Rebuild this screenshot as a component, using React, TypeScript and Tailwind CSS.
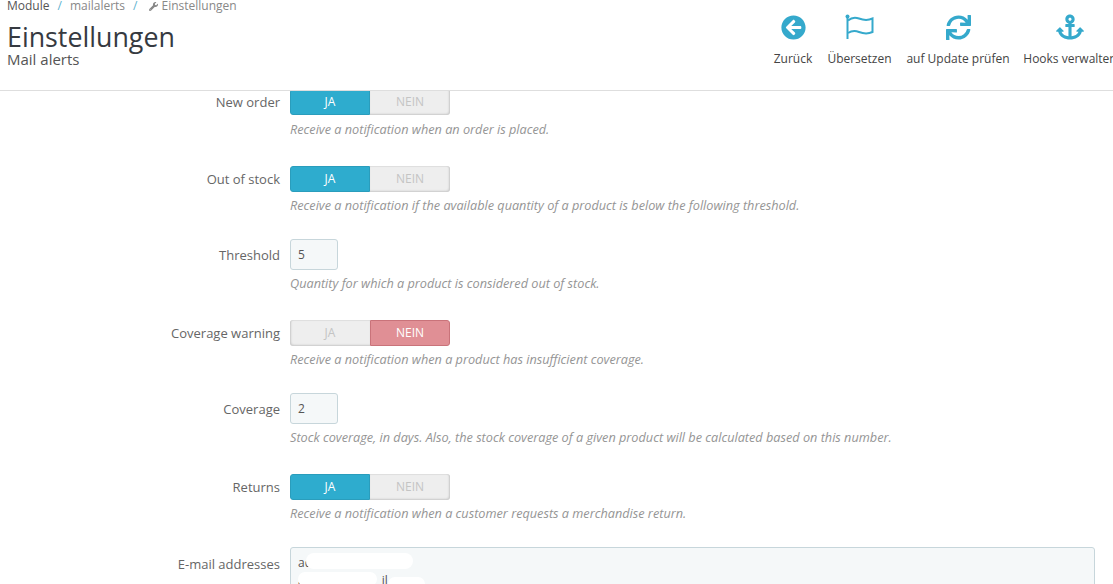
import React from "react";
import { FaArrowCircleLeft, FaSync, FaAnchor, FaWrench } from "react-icons/fa";

const FlagIcon = () => (
    <svg width="30" height="26" viewBox="0 0 30 26" fill="none" stroke="#35a9cc" strokeWidth="2">
        <circle cx="2.500" cy="2.500" r="2" fill="#35a9cc" stroke="none" />
        <path d="M2.500 3V25" />
        <path d="M3 6.500C7 3 10 3 14 4.500C18 6 22 7 27.500 4.500V18C22 20.500 18 19.500 14 18C10 16.500 7 16.500 3 19" strokeWidth="2" />
    </svg>
);

const Toolbtn = ({ icon, label, w }: { icon: React.ReactNode; label: string; w: string }) => (
    <div className={`flex flex-col items-center shrink-0 ${w}`}>
        <div className="h-[26px] flex items-center justify-center text-[#35a9cc]">{icon}</div>
        <span className="mt-[10px] text-[12px] leading-[18px] text-[#444] whitespace-nowrap">{label}</span>
    </div>
);

const Toggle = ({ on }: { on: boolean }) => (
    <div className="flex w-[160px] h-[26px] text-[12px] leading-[26px] text-center">
        {on ? (
            <>
                <div className="w-[80px] bg-[#2eacce] text-white rounded-l-[3px] border border-[#2a9dbc] leading-[24px]">JA</div>
                <div className="w-[80px] bg-[#eeeeee] text-[#c4c4c4] rounded-r-[3px] shadow-[inset_-1px_-1px_2px_rgba(0,0,0,0.16),inset_0_1px_1px_rgba(0,0,0,0.06)]">NEIN</div>
            </>
        ) : (
            <>
                <div className="w-[80px] bg-[#eeeeee] text-[#c4c4c4] rounded-l-[3px] shadow-[inset_1px_-1px_2px_rgba(0,0,0,0.16),inset_0_1px_1px_rgba(0,0,0,0.06)]">JA</div>
                <div className="w-[80px] bg-[#e08f95] text-white rounded-r-[3px] border border-[#c9737a] leading-[24px]">NEIN</div>
            </>
        )}
    </div>
);

const NumInput = ({ value }: { value: string }) => (
    <div className="w-[48px] h-[31px] pl-[7px] bg-[#f5f8f9] border border-[#c7d6db] rounded-[3px] text-[12px] leading-[30px] text-[#555]">
        {value}
    </div>
);

const Row = ({ label, help, mb, labelLh = "leading-[26px]", helpMt = "mt-[4px]", children }: { label: string; help: string; mb: string; labelLh?: string; helpMt?: string; children: React.ReactNode }) => (
    <div className={`flex ${mb}`}>
        <div className={`w-[280px] shrink-0 text-right text-[13px] text-[#666] ${labelLh}`}>{label}</div>
        <div className="ml-[10px]">
            {children}
            <p className={`${helpMt} text-[12.7px] leading-[18px] italic text-[#959595] whitespace-nowrap`}>{help}</p>
        </div>
    </div>
);

const App = () => {
    return (
        <div className="w-[1113px] h-[584px] overflow-hidden bg-white font-['Open_Sans',sans-serif]">
            <header className="relative z-10 h-[91px] bg-white border-b border-[#dedede] flex justify-between overflow-hidden">
                <div className="pl-[7px]">
                    <div className="flex items-center h-[12px] text-[12px] leading-[12px] text-[#888]">
                        <span className="text-[#555]">Module</span>
                        <span className="mx-[8px] text-[#5fb3cf]">/</span>
                        <span>mailalerts</span>
                        <span className="mx-[8px] text-[#5fb3cf]">/</span>
                        <FaWrench className="ml-[4px] mr-[3px] text-[9px] text-[#888]" />
                        <span>Einstellungen</span>
                    </div>
                    <h1 className="mt-[11px] text-[26.8px] leading-[28px] text-[#363a41]">Einstellungen</h1>
                    <p className="text-[15px] leading-[17px] text-[#555]">Mail alerts</p>
                </div>
                <div className="flex pt-[14px] gap-[14px] h-fit -mr-[3px]">
                    <Toolbtn icon={<FaArrowCircleLeft size={25} />} label="Zurück" w="w-[40px]" />
                    <Toolbtn icon={<FlagIcon />} label="Übersetzen" w="w-[65px]" />
                    <Toolbtn icon={<FaSync size={25} />} label="auf Update prüfen" w="w-[104px]" />
                    <Toolbtn icon={<FaAnchor size={28} />} label="Hooks verwalten" w="w-[92px]" />
                </div>
            </header>
            <main className="-mt-[2px]">
                <Row label="New order" mb="mb-[28px]" helpMt="mt-[5px]" help="Receive a notification when an order is placed.">
                    <Toggle on />
                </Row>
                <Row label="Out of stock" mb="mb-[25px]" help="Receive a notification if the available quantity of a product is below the following threshold.">
                    <Toggle on />
                </Row>
                <Row label="Threshold" mb="mb-[28px]" labelLh="leading-[32px]" help="Quantity for which a product is considered out of stock.">
                    <NumInput value="5" />
                </Row>
                <Row label="Coverage warning" mb="mb-[25px]" help="Receive a notification when a product has insufficient coverage.">
                    <Toggle on={false} />
                </Row>
                <Row label="Coverage" mb="mb-[28px]" labelLh="leading-[32px]" help="Stock coverage, in days. Also, the stock coverage of a given product will be calculated based on this number.">
                    <NumInput value="2" />
                </Row>
                <Row label="Returns" mb="mb-[25px]" help="Receive a notification when a customer requests a merchandise return.">
                    <Toggle on />
                </Row>
                <div className="flex">
                    <div className="w-[280px] shrink-0 text-right text-[13px] leading-[34px] text-[#666]">E-mail addresses</div>
                    <div className="relative ml-[10px] w-[805px] h-[80px] pl-[7px] pt-[6px] bg-[#f5f8f9] border border-[#c7d6db] rounded-[3px] text-[12px] leading-[18px] text-[#555]">
                        <div>ad</div>
                        <div>a<span className="ml-[77px]">il</span></div>
                        {/* redacted mail addresses */}
                        <div className="absolute left-[15px] top-[5px] w-[107px] h-[16px] rounded-full bg-white blur-[0.5px]" />
                        <div className="absolute left-[7px] top-[24px] w-[79px] h-[14px] rounded-full bg-white blur-[0.5px]" />
                        <div className="absolute left-[97px] top-[29px] w-[37px] h-[14px] rounded-full bg-white blur-[0.5px]" />
                    </div>
                </div>
            </main>
        </div>
    );
};

export default App;
